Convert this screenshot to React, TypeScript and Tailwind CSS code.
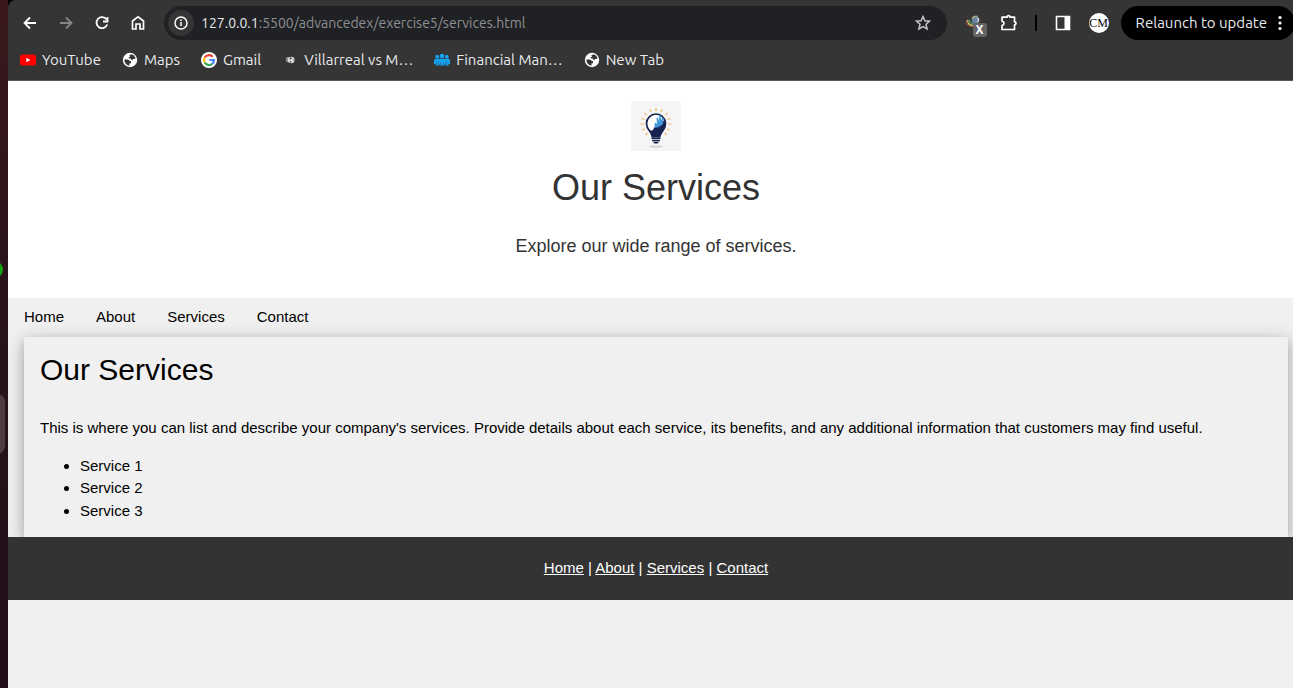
import React from "react";

const tool = "flex shrink-0 items-center justify-center";
const bookmark = "flex items-center gap-1.5 whitespace-nowrap";

function Globe() {
  return (
    <svg viewBox="0 0 16 16" className="size-4" aria-hidden="true">
      <circle cx="8" cy="8" r="7.2" fill="#fff" />
      <path d="M2.300 7.500h3.200q1.800 0 2.200 1.500h1.300v2.200H7.500v2.600Q2.600 13 2.300 7.500z" fill="#353535" />
      <path d="M7.200 3.600 9.500 2.300q3 .7 4.200 3.900l-1.400.8h-1.500v1.300l-1.500-.6-.7-1.200H6.800V5h1.400z" fill="#353535" />
    </svg>
  );
}

function YouTube() {
  return (
    <svg viewBox="0 0 16 16" className="size-4" aria-hidden="true">
      <rect y="2.500" width="16" height="11" rx="2.500" fill="#f00" />
      <path d="M6.300 5.700v4.600l4-2.300z" fill="#fff" />
    </svg>
  );
}

function Google() {
  return (
    <svg viewBox="0 0 16 16" className="size-4" aria-hidden="true">
      <circle cx="8" cy="8" r="8" fill="#fff" />
      <g fill="none" strokeWidth="2.200">
        <path d="M11.700 4.700A5 5 0 0 0 3.700 5.500" stroke="#ea4335" />
        <path d="M3.700 5.500a5 5 0 0 0 0 5" stroke="#fbbc05" />
        <path d="M3.700 10.500a5 5 0 0 0 7.500 1.400" stroke="#34a853" />
        <path d="M11.200 11.900A5 5 0 0 0 13 8H8.300" stroke="#4285f4" />
      </g>
    </svg>
  );
}

function Football() {
  return (
    <svg viewBox="0 0 16 16" className="size-4" aria-hidden="true">
      <circle cx="6.500" cy="7.500" r="2.600" fill="#a5a5a5" />
      <circle cx="9.200" cy="8" r="3.300" fill="#dcdcdc" />
      <path d="M7.800 5.500h1.700l.3 1.200-1.200.7-1.200-.7zM4.500 6.500l1.300 1.300L5.300 9zM7.500 9.500l1.300-.5.8 1.300-1.100.5zM11.500 7l.8 1.200-.8.7z" fill="#444" />
    </svg>
  );
}

function People() {
  return (
    <svg viewBox="0 0 16 16" className="size-4" aria-hidden="true" fill="#12a5f4">
      <circle cx="3.200" cy="4.700" r="1.900" />
      <circle cx="8" cy="4" r="2.300" />
      <circle cx="12.800" cy="4.700" r="1.900" />
      <path d="M0 12V9q0-2.200 2.200-2.200h11.600Q16 6.800 16 9v3h-1.500v1.500h-3V12h-.8v1.500H5.300V12h-.8v1.500h-3V12z" />
      <path d="M4.300 8.500V12M11.700 8.500V12M2.200 10v3M13.800 10v3M6.500 10v3M9.500 10v3" stroke="#245f80" strokeWidth=".6" />
    </svg>
  );
}

function Bulb() {
  return (
    <svg viewBox="0 0 50 50" className="size-[50px]" role="img" aria-label="Company logo">
      <rect width="50" height="50" fill="#f5f5f5" />
      <path d="M25 7v3M19 8.500l1 2.500M31 8.500 30 11M13.500 12l2 2M36.500 12l-2 2M10.500 17.500l3 1M39.500 17.500l-3 1M9.500 23h3.500M40.500 23H37M11 29l3-1M39 29l-3-1M14.500 34l2-2M35.500 34l-2-2" stroke="#efb368" strokeWidth="1.200" />
      <path d="M21 35c0-4-5.500-6-5.500-12.500a9.500 9.500 0 0 1 19 0c0 6.500-5.500 8.500-5.500 12.500" fill="#fff" stroke="#17234f" strokeWidth="1.700" />
      <path d="M20.500 36.500c0-4-2-6-3-8 2 1.500 4 1.500 5-.5l2-3.500 5-1 3-4 2.500 3c0 7-5.500 9-5.500 14z" fill="#17234f" />
      <path d="m24 27-.5-4 1-1.500 1.500 1.500-.5-6 1.500-.5 1 4 .3-6.500 1.500.2.300 5.800 1-4 1.500 1-.6 6-2.500 2-2 1z" fill="#4096da" />
      <path d="M20.500 37.300h9M21 39.500h8" stroke="#17234f" strokeWidth="1.400" />
      <path d="M22 40.800h6l-1.500 1.700h-3z" fill="#17234f" />
      <ellipse cx="25" cy="45.500" rx="7" ry=".9" fill="#cfcfcf" />
    </svg>
  );
}

function BrowserBar() {
  return (
    <div className="rounded-tl-lg border-b border-[#58585a] bg-[#353535] font-['Ubuntu','Noto_Sans',sans-serif] text-[15px] leading-5 text-[#e8eaed]">
      <div className="flex h-[46px] items-center pl-3">
        <button aria-label="Back" className={`${tool} size-5`}>
          <svg viewBox="0 0 20 20" className="size-5" fill="none" stroke="#fff" strokeWidth="1.800"><path d="M16 10H5M10 4.500 4.500 10l5.500 5.500" /></svg>
        </button>
        <button aria-label="Forward" className={`${tool} ml-4 size-5`}>
          <svg viewBox="0 0 20 20" className="size-5" fill="none" stroke="#858585" strokeWidth="1.800"><path d="M4 10h11M10 4.500 15.500 10 10 15.500" /></svg>
        </button>
        <button aria-label="Reload" className={`${tool} ml-4 size-5`}>
          <svg viewBox="0 0 20 20" className="size-5" fill="none" stroke="#fff" strokeWidth="1.800"><path d="M14.500 6.500A5.500 5.500 0 1 0 15.200 11.500M15.500 4V8.500h-4.500" /></svg>
        </button>
        <button aria-label="Home page" className={`${tool} ml-4 size-5`}>
          <svg viewBox="0 0 20 20" className="size-5" fill="none" stroke="#fff" strokeWidth="1.700"><path d="M4.500 16V8L10 3.800 15.500 8v8H12v-5H8v5z" /></svg>
        </button>
        <div className="ml-4 flex h-[34px] flex-1 items-center rounded-full bg-[#202124] pr-3.5 pl-1">
          <button aria-label="Site information" className={`${tool} size-[26px] rounded-full bg-[#353535]`}>
            <svg viewBox="0 0 16 16" className="size-4" fill="none" stroke="#fff" strokeWidth="1.500"><circle cx="8" cy="8" r="6" /><path d="M8 7v4M8 4.500V6" /></svg>
          </button>
          <div aria-label="Address" className="ml-[7px] flex-1 text-sm whitespace-nowrap text-[#8e9094]">
            <span className="text-[#e8eaed]">127.0.0.1</span>:5500/advancedex/exercise5/services.html
          </div>
          <button aria-label="Bookmark this page" className={`${tool} size-5`}>
            <svg viewBox="0 0 20 20" className="size-5" fill="none" stroke="#c4c5c7" strokeWidth="1.500"><path d="m10 3.500 1.900 4.300 4.600.4-3.500 3.100 1.100 4.600L10 13.500l-4.100 2.400L7 11.300 3.500 8.200l4.600-.4z" /></svg>
          </button>
        </div>
        <button aria-label="Extension" className={`${tool} relative ml-4 size-6`}>
          <svg viewBox="0 0 24 24" className="size-6" fill="none">
            <circle cx="12.500" cy="8.800" r="3.800" fill="#6c84a4" />
            <path d="M9 7.500q2-3 5.500-2" stroke="#a9b27c" strokeWidth="1.500" />
            <path d="M14.500 7q2 2 0 4" stroke="#cfd6d8" strokeWidth="1.500" />
            <path d="M3.500 9q-1.500 6 7.500 7" stroke="#8f4a44" strokeWidth="1.300" />
            <path d="M4.800 9q-1 5 6.500 5.700" stroke="#d5c96d" strokeWidth="1.300" />
            <path d="M6.500 8.500q-1 4 5 4.700" stroke="#4d8a5c" strokeWidth="1.800" />
          </svg>
          <span className="absolute top-3 left-2.5 flex size-3.5 items-center justify-center rounded-[3px] bg-[#646464] text-xs font-bold text-white">X</span>
        </button>
        <button aria-label="Extensions" className={`${tool} ml-3 size-5`}>
          <svg viewBox="0 0 20 20" className="size-5" fill="none" stroke="#fff" strokeWidth="1.700" strokeLinejoin="round"><path d="M3 4.200h5a1.500 1.500 0 0 1 3 0h4.500v4.600a1.500 1.500 0 0 1 0 3v4.700H3v-4q2-.5 2-2.200T3 8.200z" /></svg>
        </button>
        <span className="ml-4 h-4 w-0.5 bg-black" />
        <button aria-label="Side panel" className={`${tool} ml-4 size-5`}>
          <svg viewBox="0 0 20 20" className="size-5"><path d="M3.500 3.500h13v13h-13z" fill="none" stroke="#fff" strokeWidth="1.600" /><path d="M11.500 3H17v14h-5.500z" fill="#fff" /></svg>
        </button>
        <button aria-label="Profile" className={`${tool} ml-4 size-5 rounded-full bg-white font-['Liberation_Serif',serif] text-xs text-black`}>CM</button>
        <button className="ml-3 -mr-0.5 flex h-[34px] shrink-0 items-center gap-[5px] rounded-full bg-black pr-[7px] pl-[15px] whitespace-nowrap">
          Relaunch to update
          <svg viewBox="0 0 16 16" className="size-4" fill="#fff" aria-hidden="true"><circle cx="8" cy="2.500" r="1.600" /><circle cx="8" cy="8" r="1.600" /><circle cx="8" cy="13.500" r="1.600" /></svg>
        </button>
      </div>
      <nav aria-label="Bookmarks" className="flex h-[34px] items-start gap-[21px] pt-1 pl-3">
        <a href="#youtube" className={bookmark}><YouTube />YouTube</a>
        <a href="#maps" className={bookmark}><Globe />Maps</a>
        <a href="#gmail" className={bookmark}><Google />Gmail</a>
        <a href="#villarreal" className={bookmark}><Football />Villarreal vs M…</a>
        <a href="#financial" className={bookmark}><People />Financial Man…</a>
        <a href="#newtab" className={bookmark}><Globe />New Tab</a>
      </nav>
    </div>
  );
}

const links = ["Home", "About", "Services", "Contact"];

function Page() {
  return (
    <div className="-mr-[11px] font-['Liberation_Sans',Arial,sans-serif] text-[15px] leading-normal text-black">
      <header className="flex flex-col items-center bg-white pt-5 pb-[38px] text-[#333]">
        <Bulb />
        <h1 className="mt-2.5 text-4xl leading-[54px]">Our Services</h1>
        <p className="mt-[18px] text-lg leading-[27px]">Explore our wide range of services.</p>
      </header>
      <nav aria-label="Main" className="flex h-[39px]">
        {links.map((l) => <a key={l} href={`#${l}`} className="px-4 py-2">{l}</a>)}
      </nav>
      <main className="mx-4 bg-[#f0f0f0] px-4 pt-2.5 pb-[15px] shadow-[0_4px_10px_0_rgba(0,0,0,0.2),0_4px_20px_0_rgba(0,0,0,0.19)]">
        <h2 className="text-3xl leading-[45px]">Our Services</h2>
        <p className="mt-[25px]">This is where you can list and describe your company's services. Provide details about each service, its benefits, and any additional information that customers may find useful.</p>
        <ul className="mt-[15px] list-disc pl-10">
          <li>Service 1</li>
          <li>Service 2</li>
          <li>Service 3</li>
        </ul>
      </main>
      <footer className="relative bg-[#333] py-5 text-center text-white">
        {links.map((l, i) => (
          <React.Fragment key={l}>
            {i > 0 && " | "}
            <a href={`#${l}`} className="underline">{l}</a>
          </React.Fragment>
        ))}
      </footer>
    </div>
  );
}

export default function App() {
  return (
    <div className="flex min-h-screen overflow-hidden bg-[#21101a]">
      <aside className="relative w-2 shrink-0 overflow-hidden bg-linear-to-b from-[#3a191c] via-[#26121a] to-[#1f0e18]">
        <span className="absolute top-[261px] -left-3.5 size-[17px] rounded-full bg-[#12a312]" />
        <span className="absolute top-[394px] -left-5 h-[60px] w-[25px] rounded-lg bg-[#4b3c42]" />
      </aside>
      <div className="flex min-w-0 flex-1 flex-col bg-black">
        <BrowserBar />
        <div className="flex-1 overflow-hidden bg-[#f0f0f0]">
          <Page />
        </div>
      </div>
    </div>
  );
}
